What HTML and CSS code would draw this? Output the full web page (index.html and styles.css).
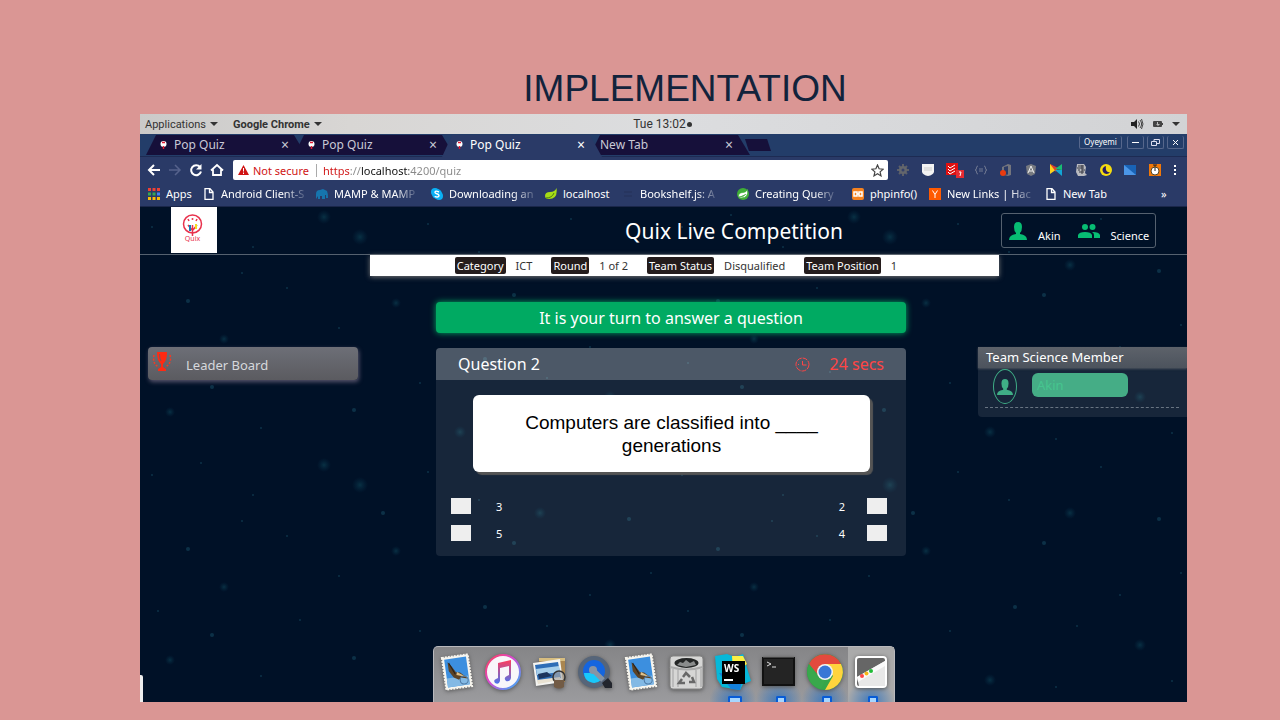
FILE: index.html
```html
<!DOCTYPE html>
<html lang="en">
<head>
<meta charset="utf-8">
<title>Implementation</title>
<link rel="stylesheet" href="styles.css">
</head>
<body>
<main class="slide">
<h1 class="slide-title">IMPLEMENTATION</h1>
<section class="screen">

<header class="desk-bar">
  <button class="desk-item">Applications <i class="caret"></i></button>
  <button class="desk-item strong">Google Chrome <i class="caret"></i></button>
  <time class="clock">Tue 13:02<i class="dot"></i></time>
  <div class="indicators">
    <svg width="13" height="12" viewBox="0 0 13 12"><path d="M0 4h3l3-3v10L3 8H0z" fill="#222"/><path d="M7.500 3.500q2 2.500 0 5M9 2q3.200 4 0 8M10.500 1q3 5 0 10" fill="none" stroke="#444"/></svg>
    <svg width="10" height="6" viewBox="0 0 10 6"><rect width="9" height="6" rx="1" fill="#444"/><rect x="9" y="2" width="1" height="2" fill="#444"/><path d="M4 1h1v2h2L5 5 3 3h1z" fill="#bbb"/></svg>
    <i class="caret"></i>
  </div>
</header>

<div class="browser">
  <div class="tab-strip">
    <button class="tab"><svg class="fav" width="7" height="9" viewBox="0 0 7 9"><circle cx="3.500" cy="3" r="3" fill="#fff"/><path d="M2 1.500h3M3.500 5v3" stroke="#e01832" stroke-width="1.500"/></svg><span>Pop Quiz</span><b>×</b></button>
    <button class="tab"><svg class="fav" width="7" height="9" viewBox="0 0 7 9"><circle cx="3.500" cy="3" r="3" fill="#fff"/><path d="M2 1.500h3M3.500 5v3" stroke="#e01832" stroke-width="1.500"/></svg><span>Pop Quiz</span><b>×</b></button>
    <button class="tab active"><svg class="fav" width="7" height="9" viewBox="0 0 7 9"><circle cx="3.500" cy="3" r="3" fill="#fff"/><path d="M2 1.500h3M3.500 5v3" stroke="#e01832" stroke-width="1.500"/></svg><span>Pop Quiz</span><b>×</b></button>
    <button class="tab blank"><span>New Tab</span><b>×</b></button>
    <button class="add-tab" aria-label="Open a tab"></button>
    <div class="window-buttons">
      <button class="profile">Oyeyemi</button>
      <button aria-label="Minimise"><svg width="9" height="9" viewBox="0 0 9 9"><path d="M1 4.500h7" stroke="#fff"/></svg></button>
      <button aria-label="Restore"><svg width="9" height="9" viewBox="0 0 9 9"><path d="M.5 3.500h5v4h-5zM3 3V1.500h5.500v4H6" fill="none" stroke="#dde"/></svg></button>
      <button aria-label="Close"><svg width="9" height="9" viewBox="0 0 9 9"><path d="M2 2l5 5M7 2L2 7" stroke="#fff"/></svg></button>
    </div>
  </div>

  <div class="toolbar">
    <nav class="nav-buttons">
      <button aria-label="Back"><svg width="14" height="14" viewBox="0 0 14 14"><path d="M13 7H2M7 2L2 7l5 5" fill="none" stroke="#fff" stroke-width="2"/></svg></button>
      <button aria-label="Forward"><svg width="14" height="14" viewBox="0 0 14 14"><path d="M1 7h11M7 2l5 5-5 5" fill="none" stroke="#56628c" stroke-width="1.500"/></svg></button>
      <button aria-label="Reload"><svg width="14" height="14" viewBox="0 0 14 14"><path d="M11 4A5 5 0 1 0 12 8.500" fill="none" stroke="#fff" stroke-width="2"/><path d="M12.500 1v5.500H7z" fill="#fff"/></svg></button>
      <button aria-label="Home"><svg width="14" height="14" viewBox="0 0 14 14"><path d="M1 7.500L7 2l6 5.500M3 6.500V12h8V6.500" fill="none" stroke="#fff" stroke-width="1.800"/></svg></button>
    </nav>
    <div class="address">
      <svg width="11" height="10" viewBox="0 0 11 10"><path d="M5.500 0L11 10H0z" fill="#d01414"/><path d="M5.500 3v3.500M5.500 7.500V9" stroke="#fff"/></svg>
      <span class="insecure">Not secure</span>
      <input class="url" type="text" aria-label="Address" value="https://localhost:4200/quiz">
      <svg width="13" height="13" viewBox="0 0 13 13"><path d="M6.500 1l1.600 3.800 4 .4-3 2.700.9 4-3.500-2.100L3 11.900l.9-4-3-2.700 4-.4z" fill="none" stroke="#444" stroke-width="1.200"/></svg>
    </div>
    <div class="extensions">
      <svg viewBox="0 0 14 14"><path d="M7 1v12M1 7h12M3 3l8 8M11 3l-8 8" stroke="#5d6069" stroke-width="2"/><circle cx="7" cy="7" r="4" fill="#63666c"/><circle cx="7" cy="7" r="1.500" fill="#34406a"/></svg>
      <svg viewBox="0 0 14 14"><path d="M1 1h12v8q-1 3-6 4-5-1-6-4z" fill="#f2f2f2"/><path d="M3 5h8M3 7h8" stroke="#ccc"/></svg>
      <svg class="wide" viewBox="0 0 18 16"><rect width="12" height="12" y="1" fill="#e01010"/><path d="M2 4l2 2 5-3M2 7l2 2 5-3M2 10l2 2 5-3" fill="none" stroke="#fff"/><rect x="10" y="8" width="8" height="8" fill="#e52b32"/><path d="M13 10h2l-1 4" stroke="#fff" fill="none"/></svg>
      <svg viewBox="0 0 14 14"><path d="M4 3Q2.500 3 2.500 5T1 7q1.500 0 1.500 2T4 11M10 3q1.500 0 1.500 2T13 7q-1.500 0-1.500 2T10 11M5 6h4M5 8h4" fill="none" stroke="#717992"/></svg>
      <svg viewBox="0 0 14 14"><path d="M3 4l6-3 3 1v10l-3 1-4-1 4-.5V3L5 4v4H3z" fill="#74757d"/><circle cx="4" cy="10" r="3" fill="#e93b10"/></svg>
      <svg viewBox="0 0 14 14"><path d="M7 1l5 2-1 8-4 2-4-2-1-8z" fill="#777a80"/><path d="M4 10l3-7 3 7M5 8h4" fill="none" stroke="#eee"/></svg>
      <svg viewBox="0 0 14 14"><path d="M1 1l7 5-7 5z" fill="#ffd21c"/><path d="M1 1l8 4-2 4z" fill="#e23e2d"/><path d="M6 6l7-5v6z" fill="#17bd73"/><path d="M6 7l7 6V7z" fill="#12a6d6"/></svg>
      <svg viewBox="0 0 14 14"><path d="M3 1h7l2 3-1 6 2 2-3 1H4L2 9z" fill="#b9bac0"/><path d="M4 3h6M3 5h7M4 7h2m2 0h3M5 9h5M8 2v9" stroke="#363943"/></svg>
      <svg viewBox="0 0 14 14"><circle cx="7" cy="7" r="6" fill="#f5dc10"/><path d="M7 3a4 4 0 1 0 4 6Q6 10 7 3" fill="#271c65"/></svg>
      <svg viewBox="0 0 14 14"><rect x="1" y="2" width="12" height="10" fill="#1963b6"/><path d="M1 2l12 10H1z" fill="#4b96e8"/></svg>
      <svg viewBox="0 0 14 14"><rect x="1" y="1" width="12" height="12" fill="#f17808"/><circle cx="7" cy="8" r="4" fill="#fff"/><path d="M5 2h4M7 2v6" stroke="#222"/><circle cx="7" cy="8" r="4" fill="none" stroke="#542"/></svg>
      <button aria-label="Menu"><svg width="4" height="12" viewBox="0 0 4 12"><path d="M1 1h2v2H1zM1 5h2v2H1zM1 9h2v2H1z" fill="#fff"/></svg></button>
    </div>
  </div>

  <nav class="bookmarks">
    <a href="#"><svg viewBox="0 0 12 12"><path d="M0 1.500h12" stroke="#ef4135" stroke-width="3" stroke-dasharray="3 1.500"/><path d="M0 6h7.500" stroke="#34a853" stroke-width="3" stroke-dasharray="3 1.500"/><path d="M9 6h3" stroke="#4285f4" stroke-width="3"/><path d="M0 10.500h12" stroke="#fbbc05" stroke-width="3" stroke-dasharray="3 1.500"/></svg><span>Apps</span></a>
    <a href="#"><svg viewBox="0 0 12 12"><path d="M2 .7h5L10 4v7.300H2zM6.500.7V4.500H10" fill="none" stroke="#fff" stroke-width="1.300"/></svg><span class="cut">Android Client-S</span></a>
    <a href="#"><svg viewBox="0 0 12 12"><path d="M0 11V6q0-4 4-4l3-1 4 2q1 2 1 7h-2V7H9v4H6V8H4v3H2V8z" fill="#1675ae"/></svg><span class="cut">MAMP &amp; MAMP</span></a>
    <a href="#"><svg viewBox="0 0 12 12"><circle cx="4" cy="4" r="4" fill="#0ab0f5"/><circle cx="8" cy="8" r="4" fill="#0ab0f5"/><circle cx="6" cy="6" r="5" fill="#0ab0f5"/><path d="M8 4Q4 2 4 4.500C4 6 8 5.500 8 7.500 8 10 4 9 4 8" fill="none" stroke="#fff" stroke-width="1.400"/></svg><span class="cut">Downloading an</span></a>
    <a href="#"><svg viewBox="0 0 12 12"><path d="M11.500 0Q13 11 4 11 0 11 0 8 0 4 5 4 10 4 11.500 0" fill="#a5dc16"/><path d="M1 10q6 0 8-5" fill="none" stroke="#507d10"/></svg><span>localhost</span></a>
    <a href="#"><svg viewBox="0 0 12 12"><path d="M2 4h8M2 8h8" stroke="#243159"/></svg><span class="cut">Bookshelf.js: A</span></a>
    <a href="#"><svg viewBox="0 0 12 12"><circle cx="6" cy="6" r="6" fill="#3fae36"/><path d="M10.500 1.500Q12 10 4 10 1 10 1.500 7 3 4 6 4.500 9 4.500 10.500 1.500M2 9q5 0 7-3" fill="#fff" stroke="#3fae36" stroke-width=".7"/></svg><span class="cut">Creating Query</span></a>
    <a href="#"><svg viewBox="0 0 12 12"><rect width="12" height="12" rx="2" fill="#f58220"/><path d="M2 4h3v4H2zM7 4h3v4H7zM5 6h2" fill="none" stroke="#fff" stroke-width="1.500"/></svg><span>phpinfo()</span></a>
    <a href="#"><svg viewBox="0 0 12 12"><rect width="12" height="12" fill="#ff5a00"/><path d="M3.500 2.500L6 6.500l2.500-4M6 6.500V10" fill="none" stroke="#fff"/></svg><span class="cut">New Links | Hac</span></a>
    <a href="#"><svg viewBox="0 0 12 12"><path d="M2 .7h5L10 4v7.300H2zM6.500.7V4.500H10" fill="none" stroke="#fff" stroke-width="1.300"/></svg><span>New Tab</span></a>
    <button aria-label="More bookmarks">»</button>
  </nav>
</div>

<div class="app">
  <svg class="stars" aria-hidden="true"><defs><radialGradient id="glow"><stop offset="0" stop-color="#15606f" stop-opacity=".4"/><stop offset="1" stop-color="#0b4562" stop-opacity="0"/></radialGradient>
    <pattern id="sky" width="530" height="248" patternUnits="userSpaceOnUse"><g fill="url(#glow)"><circle cx="184" cy="10" r="7"/><circle cx="220" cy="30" r="8"/><circle cx="256" cy="96" r="5"/><circle cx="84" cy="132" r="5"/><circle cx="400" cy="58" r="6"/><circle cx="470" cy="190" r="6"/><circle cx="320" cy="225" r="6"/><circle cx="30" cy="205" r="5"/></g><g fill="#175067" opacity=".5"><circle cx="12" cy="20" r="1"/><circle cx="61" cy="8" r="1"/><circle cx="113" cy="40" r="1"/><circle cx="147" cy="81" r="1"/><circle cx="48" cy="94" r="2"/><circle cx="102" cy="66" r="1"/><circle cx="199" cy="121" r="1"/><circle cx="243" cy="58" r="2"/><circle cx="288" cy="17" r="1"/><circle cx="339" cy="45" r="1"/><circle cx="374" cy="88" r="2"/><circle cx="431" cy="12" r="1"/><circle cx="489" cy="64" r="2"/><circle cx="511" cy="118" r="1"/><circle cx="450" cy="140" r="1"/><circle cx="407" cy="171" r="1"/><circle cx="345" cy="152" r="2"/><circle cx="280" cy="176" r="1"/><circle cx="214" cy="203" r="2"/><circle cx="160" cy="165" r="1"/><circle cx="121" cy="221" r="1"/><circle cx="72" cy="180" r="2"/><circle cx="18" cy="156" r="1"/><circle cx="386" cy="232" r="1"/><circle cx="502" cy="226" r="1"/></g></pattern></defs><rect width="100%" height="100%" fill="url(#sky)"/></svg>

  <header class="app-header">
    <svg class="logo" viewBox="0 0 46 46" role="img" aria-label="Quix"><rect width="46" height="46" fill="#fff"/><circle cx="21.500" cy="17" r="9" fill="none" stroke="#e8314c" stroke-width="1.500"/><path d="M21.500 18v11M17 12l1 2M26 12l-1 2M17 18l4 5M26 18l-4 5" stroke="#e8314c" stroke-width="1.500"/><path d="M19 18v6" stroke="#1579b8" stroke-width="2"/><path d="M25 17v5" stroke="#f4dc21" stroke-width="2"/><circle cx="21.500" cy="12" r="1" fill="#e8314c"/><text class="logo-name" x="21.500" y="34" text-anchor="middle">Quix</text></svg>
    <h2>Quix Live Competition</h2>
    <div class="user-box">
      <svg width="18" height="18" viewBox="0 0 18 18"><path d="M9 0q4 0 4 5 0 4-2 6v1q7 1 7 6H0q0-5 7-6v-1Q5 9 5 5q0-5 4-5" fill="#07bd73"/></svg><span>Akin</span>
      <svg width="22" height="14" viewBox="0 0 22 14"><g fill="#07bd73"><circle cx="7" cy="3" r="3"/><circle cx="14.500" cy="3" r="3"/><path d="M0 14v-3q1-3 7-3t7 3v3zM15 8q6 0 7 3v3h-6v-3q0-2-2-3z"/></g></svg><span>Science</span>
    </div>
  </header>

  <dl class="status-bar">
    <div><dt>Category</dt><dd>ICT</dd></div>
    <div><dt>Round</dt><dd>1 of 2</dd></div>
    <div><dt>Team Status</dt><dd>Disqualified</dd></div>
    <div><dt>Team Position</dt><dd>1</dd></div>
  </dl>

  <div class="columns">
    <button class="leader">
      <svg width="20" height="19" viewBox="0 0 20 19"><path d="M5 0h10q0 8-3 11l-1 1v3l3 2v2H6v-2l3-2v-3Q5 9 5 0" fill="#ff2a12"/><path d="M7.500 2q0 5 1.500 7" fill="none" stroke="#77575d"/><path d="M2 3q-2 9 5 12M18 3q2 9-5 12" fill="none" stroke="#f43923" stroke-width="1.500" stroke-dasharray="2 1.500"/></svg>
      <span>Leader Board</span>
    </button>
    <div class="quiz">
      <p class="turn">It is your turn to answer a question</p>
      <form class="question">
        <div class="question-head"><h3>Question 2</h3>
          <svg width="15" height="15" viewBox="0 0 15 15"><circle cx="7.500" cy="7.500" r="6.500" fill="none" stroke="#ff4545" stroke-dasharray="5 1"/><path d="M7.500 4v4h4M3 7.500h1" fill="none" stroke="#ff4545"/></svg>
          <strong>24 secs</strong></div>
        <p class="prompt">Computers are classified into ____ generations</p>
        <div class="answers">
          <label><input type="checkbox"><span>3</span></label>
          <label class="flip"><input type="checkbox"><span>2</span></label>
          <label><input type="checkbox"><span>5</span></label>
          <label class="flip"><input type="checkbox"><span>4</span></label>
        </div>
      </form>
    </div>
    <aside class="team">
      <h3>Team Science Member</h3>
      <div class="member">
        <span class="avatar"><svg width="16" height="16" viewBox="0 0 18 18"><path d="M9 0q4 0 4 5 0 4-2 6v1q7 1 7 6H0q0-5 7-6v-1Q5 9 5 5q0-5 4-5" fill="#3fae86"/></svg></span>
        <span class="member-name">Akin</span>
      </div>
    </aside>
  </div>

  <span class="edge-handle"></span>

  <nav class="dock">
    <button aria-label="Mail"><svg viewBox="0 0 36 38"><g transform="rotate(-8 18 19)"><rect x="5" y="3" width="26" height="32" fill="#f7f5ee" stroke="#f7f5ee" stroke-width="2" stroke-dasharray="2 1"/><rect x="7" y="5" width="22" height="28" fill="#3c8fdf"/><path d="M7 24h22v9H7z" fill="#83b9e4"/><path d="M10 8q4 5 7 11l4 1 7 7-7-2-2 2-5-3-4-7z" fill="#5c4326"/><path d="M18 19l8 6-9-3z" fill="#dec28c"/><path d="M11 9l5 12" stroke="#251f1b"/><circle cx="24" cy="28" r="4" fill="none" stroke="#4c78a4"/></g></svg></button>
    <button aria-label="Music"><svg viewBox="0 0 36 38"><defs><linearGradient id="ring" x2="1" y2="1"><stop stop-color="#ff4053"/><stop offset=".45" stop-color="#d84ad4"/><stop offset="1" stop-color="#2cb6fb"/></linearGradient><linearGradient id="note" x2="0" y2="1"><stop stop-color="#ff3d5c"/><stop offset="1" stop-color="#4a75ef"/></linearGradient></defs><circle cx="18" cy="19" r="17" fill="#f8f7fa" stroke="url(#ring)" stroke-width="2"/><path d="M13 10l13-3v18q-1 4-5 3-3-3 1-5l2-1V13l-9 2v13q-1 4-5 2-2-3 1-4l2-1z" fill="url(#note)"/></svg></button>
    <button aria-label="Preview"><svg viewBox="0 0 36 38"><path d="M8 5h26v24H8z" fill="#aa8650"/><path d="M8 5h26v3H8z" fill="#d7bd80"/><path d="M2 10l27-4 3 23-27 4z" fill="#f4f4f1"/><path d="M4 12l23-3 3 16-23 4z" fill="#2e6db6"/><path d="M5 16l23-3 1 6-23 3z" fill="#a7cfeb"/><path d="M6 27l23-3v3L7 31z" fill="#e9e2d2"/><path d="M7 21l9-2 5 4-13 3z" fill="#1d365e"/><circle cx="28" cy="24" r="6" fill="#aaa" fill-opacity=".65" stroke="#333" stroke-width="1.500"/><path d="M23 27h10v7q-5 3-10 0z" fill="#725b45"/></svg></button>
    <button aria-label="Player"><svg viewBox="0 0 36 38"><circle cx="17" cy="19" r="16" fill="#566579"/><path d="M25 30l6-5 4 5v5h-7z" fill="#22252d"/><circle cx="17" cy="18" r="11" fill="#1465df"/><path d="M7 20a10 10 0 0 0 17 7l-6-7z" fill="#19c8fa"/><circle cx="16" cy="17" r="4" fill="#8794a5"/><path d="M16 17l10 10" stroke="#8794a5" stroke-width="5"/></svg></button>
    <button aria-label="Stamps"><svg viewBox="0 0 36 38"><g transform="rotate(-8 18 19)"><rect x="5" y="3" width="26" height="32" fill="#f7f5ee" stroke="#f7f5ee" stroke-width="2" stroke-dasharray="2 1"/><rect x="7" y="5" width="22" height="28" fill="#3c8fdf"/><path d="M7 24h22v9H7z" fill="#83b9e4"/><path d="M10 8q4 5 7 11l4 1 7 7-7-2-2 2-5-3-4-7z" fill="#5c4326"/><path d="M18 19l8 6-9-3z" fill="#dec28c"/><path d="M11 9l5 12" stroke="#251f1b"/><circle cx="24" cy="28" r="4" fill="none" stroke="#4c78a4"/></g></svg></button>
    <button aria-label="Bin"><svg viewBox="0 0 36 38"><rect x="1" y="3" width="33" height="33" rx="3" fill="#d6d6d5" stroke="#858585"/><path d="M4 16v18M9 17v17M27 17v17M32 16v18" stroke="#bbb" stroke-width="2"/><ellipse cx="17.500" cy="10" rx="12" ry="5" fill="#232525"/><path d="M8 12l3-3 3 1 3-3 4 3 4-2 2 4-10 2z" fill="#8a8c8c"/><path d="M1 14q17 5 33 0" fill="none" stroke="#aaa" stroke-width="2"/><path d="M14 24l3-4 4 4M23 24l2 5h-5M16 30h-6l3-4" fill="none" stroke="#686868" stroke-width="2.500"/></svg></button>
    <button class="running double" aria-label="Editor"><svg viewBox="0 0 36 38"><path d="M0 3l12-2 8 3 8-3 4 14 4 13-8 3-3 6-18-3-5-8z" fill="#07b8d9"/><path d="M17 3h11l4 8-14 10z" fill="#fcf044"/><path d="M4 20l12 16 9 1 3-15z" fill="#147fda"/><rect x="7" y="8" width="23" height="23" fill="#000"/><text class="editor-mark" x="9" y="19">WS</text><path d="M9 27h9" stroke="#fff" stroke-width="2"/></svg></button>
    <button class="running" aria-label="Terminal"><svg viewBox="0 0 36 38"><rect x="2" y="5" width="31" height="27" fill="#242424" stroke="#111" stroke-width="2"/><path d="M2 4h31" stroke="#777"/><path d="M6 9l4 2-4 2M11 14h4" fill="none" stroke="#ddd"/></svg></button>
    <button class="running" aria-label="Browser"><svg viewBox="0 0 36 38"><circle cx="18" cy="19" r="18" fill="#35a64a"/><path d="M2 11A18 18 0 0 1 34 11H18L12 23z" fill="#e34a3d"/><path d="M34 11A18 18 0 0 1 18 37l8-14-8-12z" fill="#ffd43d"/><path d="M2 11l8 13 8 4-4 8A18 18 0 0 1 2 11" fill="#38a84c"/><circle cx="18" cy="19" r="8" fill="#f2f4f5"/><circle cx="18" cy="19" r="6.500" fill="#3877d6"/></svg></button>
    <button class="running current" aria-label="Windows"><svg viewBox="0 0 36 38"><rect x="3" y="4" width="30" height="30" rx="3" fill="#666" stroke="#fff" stroke-width="2"/><path d="M4 24L32 8v25H6z" fill="#e8e8e8"/><path d="M4 24L32 8v5L5 29z" fill="#fafafa"/><circle cx="9" cy="23" r="2" fill="#ff4747"/><circle cx="13.500" cy="20.500" r="2" fill="#f5b719"/><circle cx="18" cy="18" r="2" fill="#21bb38"/></svg></button>
  </nav>
</div>
</section>
</main>
</body>
</html>
```
FILE: styles.css
```css
* { box-sizing: border-box; }
body { margin: 0; background: #da9694; font-family: "Liberation Sans", Arial, sans-serif; }
button { border: 0; padding: 0; background: none; color: inherit; font: inherit; }
h1, h2, h3, p, dl, dd { margin: 0; font-weight: normal; }
svg { display: block; flex: none; }
a { color: inherit; text-decoration: none; }

.slide { display: flex; flex-direction: column; min-height: 100vh; padding: 64px 93px 18px 140px; }
.slide-title { height: 50px; padding-left: 43px; text-align: center; font-size: 37px; line-height: 50px; color: #12233c; }
.screen { flex: 1; display: flex; flex-direction: column; overflow: hidden; font-family: "Comic Sans MS", "Noto Sans", sans-serif; }

.desk-bar { display: grid; grid-template-columns: 88px 1fr auto 1fr 88px; align-items: center; height: 20px; padding: 0 7px 0 5px; background: linear-gradient(90deg, #cbcac9, #d8d6d4 20%, #dcdddf 50%, #d2d3d5); color: #333; font: 12px "Roboto", sans-serif; }
.desk-item { display: flex; align-items: center; gap: 4px; font-size: 11px; }
.strong { font-weight: bold; }
.caret { border: 4px solid transparent; border-top-color: #333; border-bottom: 0; }
.clock { display: flex; align-items: center; gap: 1px; }
.dot { width: 5px; height: 5px; border-radius: 50%; background: #333; }
.indicators { grid-column: 5; display: flex; justify-content: flex-end; align-items: center; gap: 9px; }

.browser { background: #2a3a67; color: #fff; font-size: 12px; }
.tab-strip { display: flex; align-items: flex-start; height: 23px; padding: 1px 3px 0 12px; background: #233d69; border-bottom: 1px solid #1d2b53; }
.tab { position: relative; z-index: 0; display: flex; align-items: center; width: 148px; height: 20px; padding: 0 11px 0 8px; color: #c9c9d6; }
.tab::before { content: ""; position: absolute; z-index: -1; inset: 0 -6px 0 -6px; background: #16103a; clip-path: polygon(10px 0, 148px 0, 100% 100%, 0 100%); }
.active { z-index: 1; color: #fff; }
.active::before { background: #2a3a67; bottom: -2px; }
.tab span { margin-right: auto; line-height: 20px; }
.fav + span { margin-left: 7px; }
.blank { padding-left: 4px; }
.tab b { font-size: 14px; font-weight: normal; line-height: 20px; }
.add-tab { width: 26px; height: 12px; margin: 4px 0 0 1px; background: #16103a; clip-path: polygon(0 0, 85% 0, 100% 100%, 15% 100%); }
.window-buttons { display: flex; gap: 3px; margin-left: auto; padding-top: 1px; }
.window-buttons button { display: grid; place-items: center; width: 17px; height: 13px; border: 1px solid #56678c; border-top: 0; border-radius: 2px; }
.window-buttons .profile { width: 43px; margin-right: 2px; font-size: 8px; line-height: 12px; }

.toolbar { display: flex; align-items: center; height: 26px; padding: 0 10px 0 7px; }
.nav-buttons { display: flex; gap: 7px; width: 86px; }
.address { flex: 1; display: flex; align-items: center; height: 20px; padding: 0 4px 0 5px; border-radius: 2px; background: #fff; }
.insecure { width: 64px; margin: 0 5px 0 4px; border-right: 1px solid #aaa; color: #d01414; font-size: 11px; line-height: 13px; }
.url { flex: 1; min-width: 0; border: 0; padding: 0 0 0 1px; outline: 0; color: transparent; font: inherit; font-size: 11px; background: linear-gradient(90deg, #d01414 28px, #888 28px 39px, #111 39px 87px, #888 87px) text; -webkit-background-clip: text; }
.extensions { display: flex; align-items: center; justify-content: space-between; width: 289px; padding-left: 8px; }
.extensions > svg { width: 14px; height: 14px; }
.extensions > .wide { width: 18px; height: 16px; }

.bookmarks { display: grid; grid-template-columns: 55fr 113fr 115fr 114fr 77fr 115fr 115fr 77fr 116fr 116fr 18fr; align-items: center; height: 24px; padding: 0 8px 2px; border-bottom: 1px solid #1a2649; font-size: 11px; }
.bookmarks a { display: flex; align-items: center; gap: 6px; min-width: 0; white-space: nowrap; }
.bookmarks a svg { width: 12px; height: 12px; }
.bookmarks span { line-height: 16px; }
.bookmarks .cut { mask-image: linear-gradient(90deg, #000 75%, rgba(0, 0, 0, .2)); }
.bookmarks button { text-align: left; }

.app { position: relative; z-index: 0; flex: 1; display: flex; flex-direction: column; background: #001127; color: #fff; }
.stars { position: absolute; z-index: -1; inset: 0; width: 100%; height: 100%; }
.app-header { display: grid; grid-template-columns: 46px 1fr 155px; align-items: center; height: 48px; padding: 0 31px; border-bottom: 1px solid #55616f; }
.logo { align-self: start; width: 46px; height: 46px; }
.logo-name { font-size: 7px; fill: #e8314c; }
.app-header h2 { padding-left: 250px; text-align: center; font-size: 21px; line-height: 30px; }
.user-box { display: flex; align-items: center; gap: 11px; height: 35px; padding: 0 7px; border: 1px solid #55616f; border-radius: 3px; font-size: 11px; }
.user-box span { margin: 11px 6px 0 0; line-height: 16px; }
.user-box span:last-child { margin-right: 0; }

.status-bar { display: flex; justify-content: center; align-items: center; gap: 19px; height: 21px; width: 60%; margin-left: 22%; padding-right: 17px; background: #fff; box-shadow: 0 1px 5px #777; font-size: 11px; line-height: 17px; }
.status-bar div { display: flex; gap: 10px; }
.status-bar dt { padding: 0 2px; border-radius: 2px; background: #241c1c; }
.status-bar dd { color: #333; }

.columns { display: grid; grid-template-columns: 210fr 476fr 209fr; column-gap: 72px; align-items: start; padding: 26px 0 0 8px; }
.leader { display: flex; align-items: center; gap: 14px; height: 33px; margin-top: 45px; padding: 0 4px; border-radius: 4px; background: linear-gradient(#6d6f77, #5b5b60); box-shadow: 1px 2px 4px #58546c; color: #d6d8dc; font-size: 13px; }
.leader svg { margin-bottom: 4px; }
.leader span { padding-top: 3px; }
.quiz { padding-left: 6px; }
.turn { height: 31px; border-radius: 4px; background: #00aa62; box-shadow: 0 0 6px #00aa62; text-align: center; font-size: 16px; line-height: 32px; }
.question { margin-top: 15px; padding-bottom: 13px; border-radius: 4px; background: rgba(255, 255, 255, .09); overflow: hidden; }
.question-head { display: flex; align-items: center; gap: 20px; height: 32px; padding: 0 22px; background: rgba(255, 255, 255, .23); font-size: 16px; line-height: 32px; }
.question-head h3 { margin-right: auto; font-size: 16px; }
.question-head strong { color: #ff4545; font-weight: normal; }
.prompt { margin: 15px 36px 24px 37px; padding: 16px 40px 15px; border-radius: 6px; background: #fff; box-shadow: 3px 3px 1px #555; color: #000; text-align: center; font: 19px/23px "Liberation Sans", Arial, sans-serif; }
.answers { display: grid; grid-template-columns: 1fr 1fr; gap: 7px; padding: 0 19px 0 15px; font-size: 11px; }
.answers label { display: flex; align-items: center; gap: 25px; height: 20px; }
.answers .flip { flex-direction: row-reverse; gap: 22px; }
.answers input { appearance: none; width: 20px; height: 16px; margin: 0; background: #eee; }

.team { margin-top: 45px; border-radius: 4px 0 0 4px; background: rgba(255, 255, 255, .09); }
.team h3 { height: 21px; padding-left: 8px; background: linear-gradient(#5d626a, #4c535d); box-shadow: 0 1px 2px #4c535d; font-size: 13px; line-height: 21px; }
.member { display: flex; align-items: flex-start; gap: 15px; height: 40px; margin: 0 8px 9px 7px; padding: 1px 8px; border-bottom: 1px dashed #687482; }
.avatar { display: grid; place-items: center; width: 24px; height: 35px; border: 1px solid #3fae86; border-radius: 50%; }
.member-name { width: 96px; height: 24px; margin-top: 4px; padding-left: 5px; border-radius: 6px; background: #45ad86; color: #45c58f; font-size: 13px; line-height: 24px; }

.edge-handle { position: absolute; left: 0; bottom: 0; width: 3px; height: 27px; background: #eee; border-radius: 0 2px 0 0; }
.dock { display: flex; align-self: center; height: 56px; margin-top: auto; border: 1px solid #b9b9bd; border-bottom: 0; border-radius: 5px 5px 0 0; background: linear-gradient(#858587, #9b9b9e); }
.dock button { position: relative; display: flex; align-items: flex-start; width: 46px; padding: 6px 5px 0; }
.dock svg { width: 36px; height: 38px; filter: drop-shadow(0 1px 2px #555); }
.running { background: radial-gradient(circle at 50% 100%, #3d78bb, transparent 40%); }
.running::after { content: ""; position: absolute; left: 20px; bottom: 0; width: 6px; height: 4px; border: 2px solid #075bd6; border-bottom: 0; border-radius: 2px 2px 0 0; background: #a6d6ff; }
.double::after { width: 10px; left: 18px; }
.current { background-color: #aaa; }
.editor-mark { font: bold 10px "Noto Sans", sans-serif; fill: #fff; }
```
